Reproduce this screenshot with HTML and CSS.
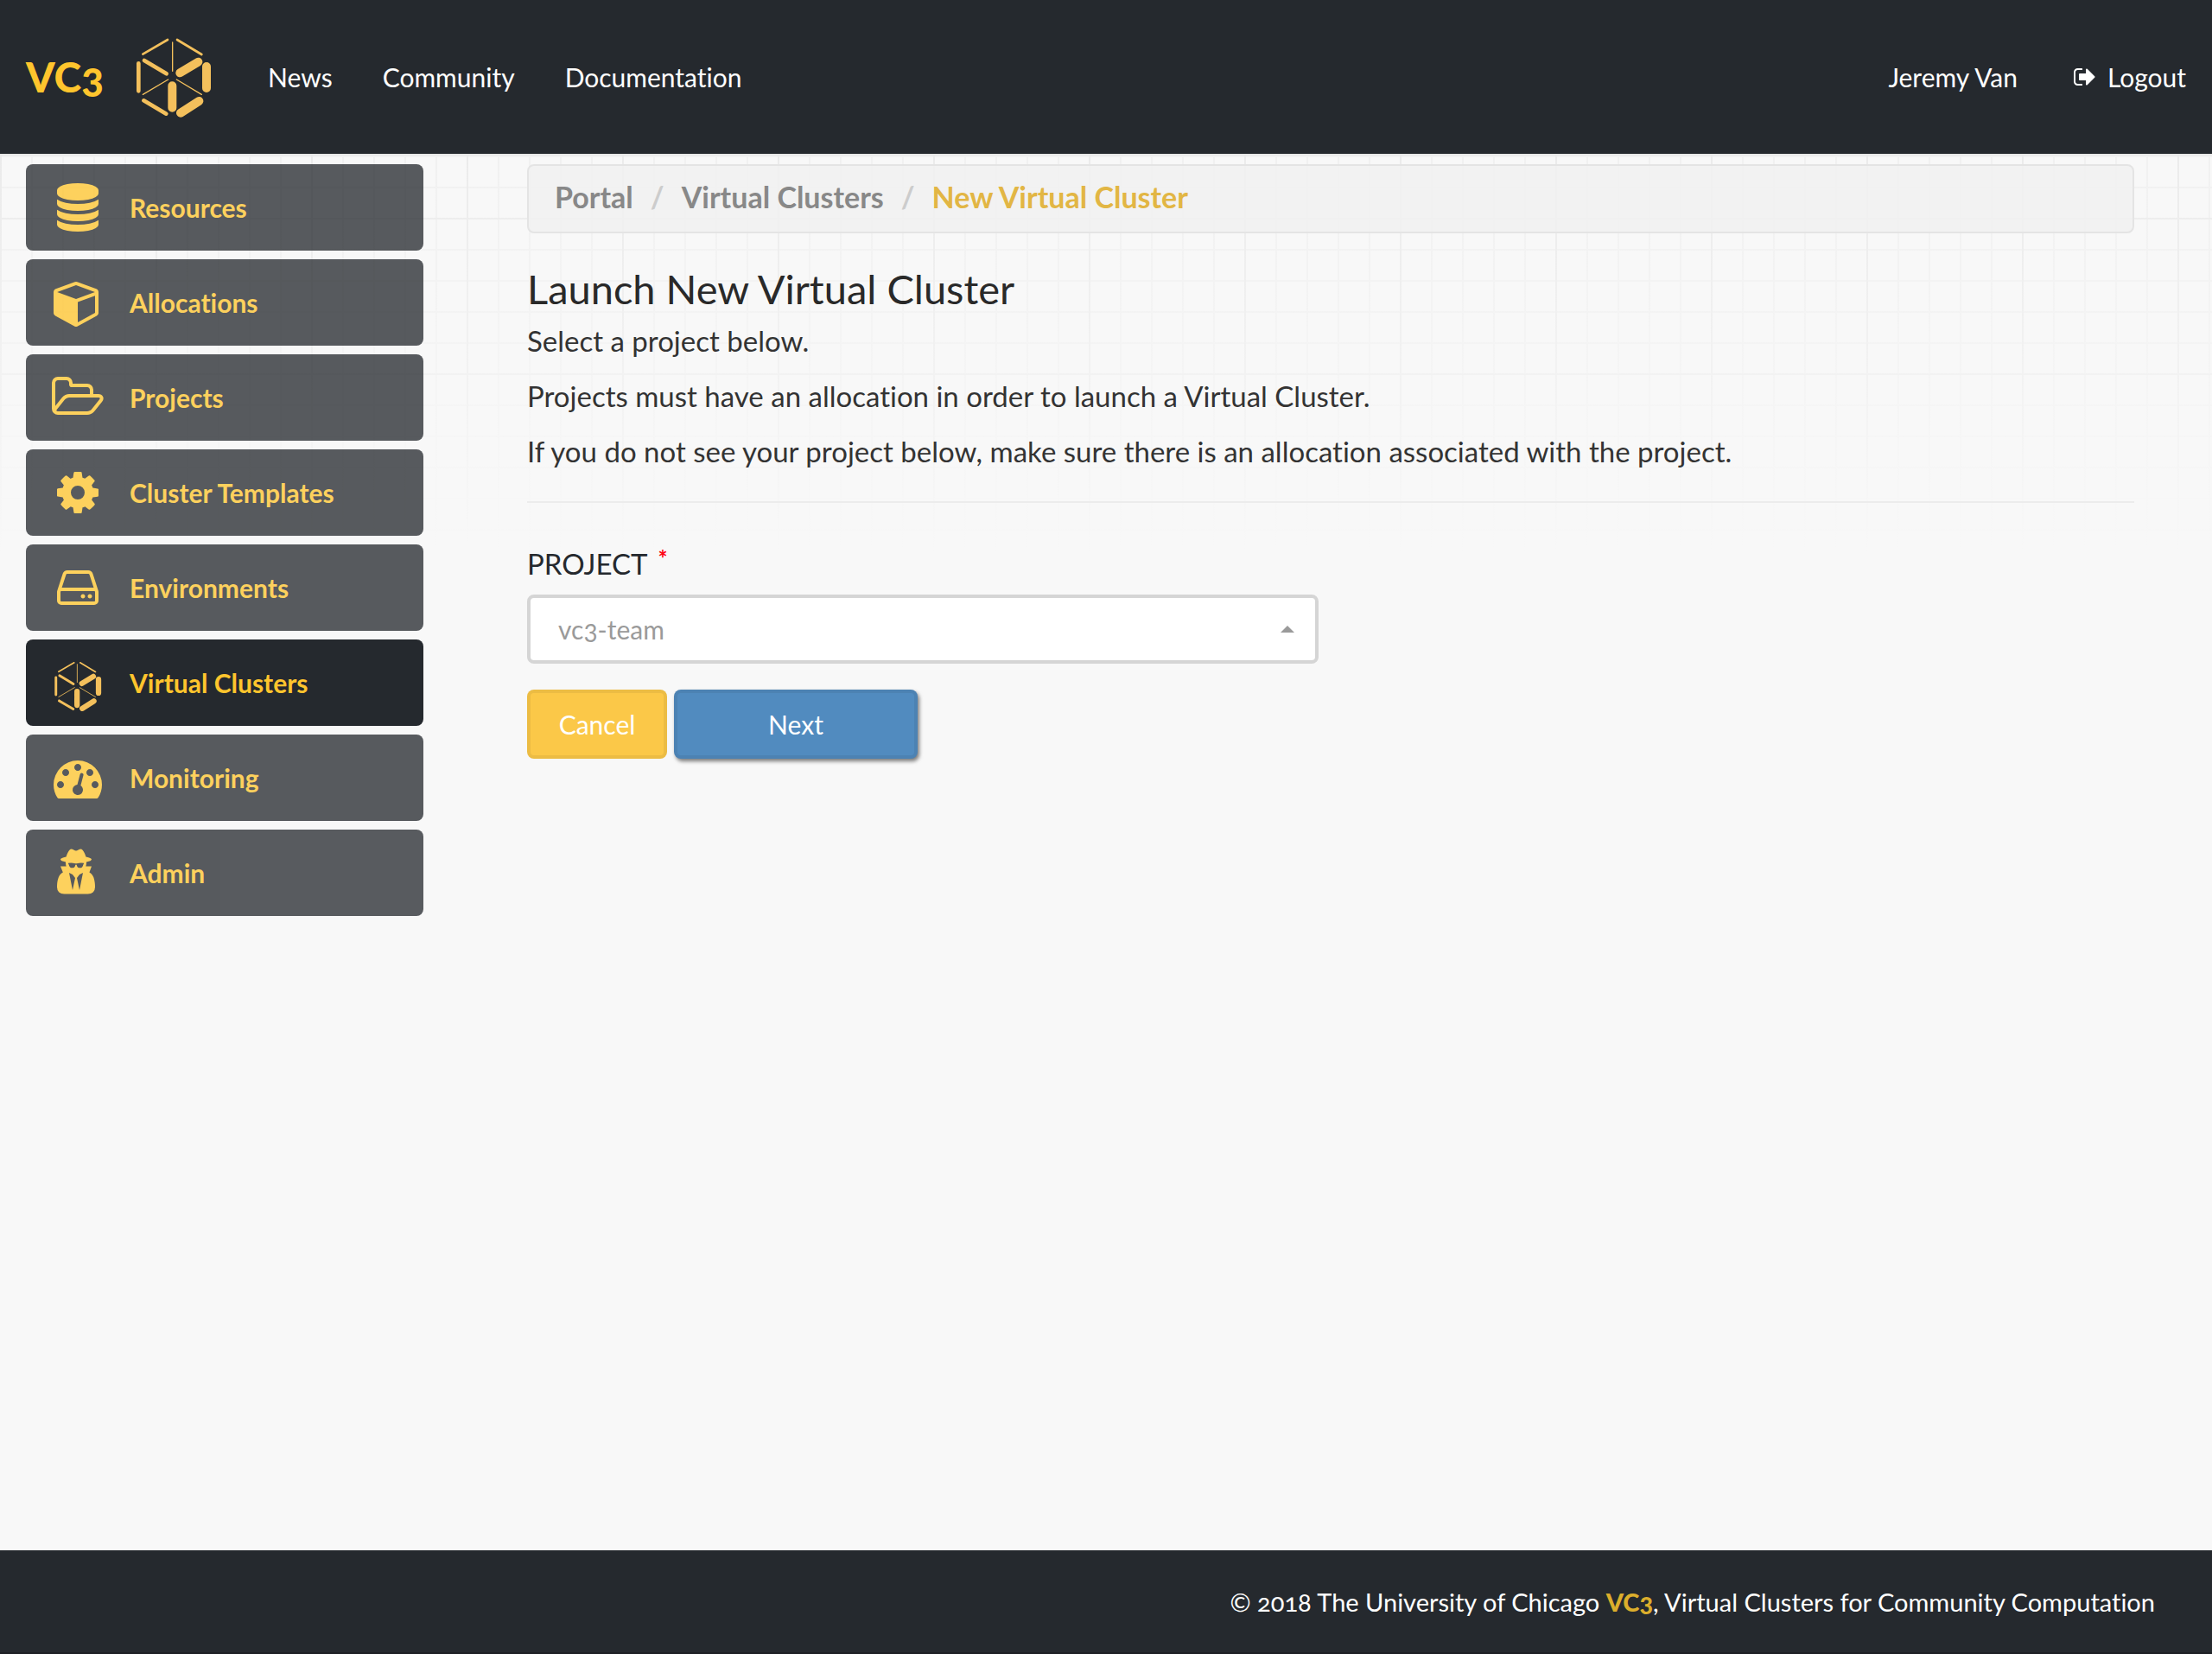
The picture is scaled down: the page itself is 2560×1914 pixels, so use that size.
FILE: index.html
```html
<!DOCTYPE html>
<html lang="en">
<head>
<meta charset="utf-8">
<meta name="viewport" content="width=device-width, initial-scale=1">
<title>VC3 - New Virtual Cluster</title>
<link rel="stylesheet" href="styles.css">
</head>
<body>
<svg class="sprite" aria-hidden="true">
  <symbol id="vc3-mark" viewBox="75 66 270 282">
    <g fill="none" stroke="currentColor" stroke-linecap="round">
      <path stroke-width="8" d="M103 128L189 78M222 78L307 129"/>
      <path stroke-width="4" d="M206 87V187M191 216L103 268M220 216L307 268"/>
      <path stroke-width="14" d="M108 150L185 196M106 289L184 335M88 160V256"/>
      <path stroke-width="30" d="M232 193L295 155M324 171V246M205 238V314M234 332L298 291"/>
    </g>
  </symbol>
</svg>

<header class="topbar">
  <a class="brand" href="#">VC3 <svg class="brand-mark" aria-hidden="true"><use href="#vc3-mark"/></svg></a>
  <nav class="topnav" aria-label="Main">
    <a href="#">News</a>
    <a href="#">Community</a>
    <a href="#">Documentation</a>
  </nav>
  <nav class="account" aria-label="Account">
    <a href="#">Jeremy Van</a>
    <a class="logout" href="#"><svg class="logout-icon" viewBox="0 0 1792 1792" aria-hidden="true"><path d="M704 1440q0 4 1 20t.5 26.5-3 23.5-10 19.5-20.5 6.5h-320q-119 0-203.5-84.5t-84.5-203.5v-704q0-119 84.5-203.5t203.5-84.5h320q13 0 22.500 9.500t9.500 22.500q0 4 1 20t.5 26.500-3 23.500-10 19.500-20.500 6.500h-320q-66 0-113 47t-47 113v704q0 66 47 113t113 47h312l11.500 1 11.500 3 8 5.500 7 9 2 13.500zm928-544q0 26-19 45l-544 544q-19 19-45 19t-45-19-19-45v-288h-448q-26 0-45-19t-19-45v-384q0-26 19-45t45-19h448v-288q0-26 19-45t45-19 45 19l544 544q19 19 19 45z"/></svg>Logout</a>
  </nav>
</header>

<div class="layout">
  <nav class="sidebar" aria-label="Portal">
    <a class="side-link" href="#"><span class="side-icon"><svg width="56" height="56" viewBox="0 0 1792 1792" aria-hidden="true"><path d="M896 768q237 0 443-43t325-127v170q0 69-103 128t-280 93.5-385 34.5-385-34.5-280-93.5-103-128v-170q119 84 325 127t443 43zm0 768q237 0 443-43t325-127v170q0 69-103 128t-280 93.5-385 34.5-385-34.5-280-93.5-103-128v-170q119 84 325 127t443 43zm0-384q237 0 443-43t325-127v170q0 69-103 128t-280 93.5-385 34.5-385-34.5-280-93.5-103-128v-170q119 84 325 127t443 43zm0-1152q208 0 385 34.5t280 93.5 103 128v128q0 69-103 128t-280 93.5-385 34.5-385-34.5-280-93.5-103-128v-128q0-69 103-128t280-93.5 385-34.5z"/></svg></span>Resources</a>
    <a class="side-link" href="#"><span class="side-icon"><svg width="56" height="56" viewBox="0 0 1792 1792" aria-hidden="true"><path d="M896 1629l640-349v-636l-640 233v752zm-64-865l698-254-698-254-698 254zm832-252v768q0 35-18 65t-49 47l-704 384q-28 16-61 16t-61-16l-704-384q-31-17-49-47t-18-65v-768q0-40 23-73t61-47l704-256q22-8 44-8t44 8l704 256q38 14 61 47t23 73z"/></svg></span>Allocations</a>
    <a class="side-link" href="#"><span class="side-icon"><svg width="64" height="56" viewBox="0 0 2048 1792" aria-hidden="true"><path d="M1845 931q0-35-53-35h-1088q-40 0-85.5 21.5t-71.5 52.5l-294 363q-18 24-18 40 0 35 53 35h1088q40 0 86-22t71-53l294-363q18-22 18-39zm-1141-163h768v-160q0-40-28-68t-68-28h-576q-40 0-68-28t-28-68v-64q0-40-28-68t-68-28h-320q-40 0-68 28t-28 68v853l256-315q44-53 116-87.5t140-34.5zm1269 163q0 62-46 120l-295 363q-43 53-116 87.5t-140 34.5h-1088q-92 0-158-66t-66-158v-960q0-92 66-158t158-66h320q92 0 158 66t66 158v32h544q92 0 158 66t66 158v160h192q54 0 99 24.5t67 70.5q15 32 15 68z"/></svg></span>Projects</a>
    <a class="side-link" href="#"><span class="side-icon"><svg width="56" height="56" viewBox="0 0 1792 1792" aria-hidden="true"><path d="M1152 896q0-106-75-181t-181-75-181 75-75 181 75 181 181 75 181-75 75-181zm512-109v222q0 12-8 23t-20 13l-185 28q-19 54-39 91 35 50 107 138 10 12 10 25t-9 23q-27 37-99 108t-94 71q-12 0-26-9l-138-108q-44 23-91 38-16 136-29 186-7 28-36 28h-222q-14 0-24.5-8.5t-11.5-21.500l-28-184q-49-16-90-37l-141 107q-10 9-25 9-14 0-25-11-126-114-165-168-7-10-7-23 0-12 8-23 15-21 51-66.5t54-70.5q-27-50-41-99l-183-27q-13-2-21-12.5t-8-23.5v-222q0-12 8-23t19-13l186-28q14-46 39-92-40-57-107-138-10-12-10-24 0-10 9-23 26-36 98.5-107.5t94.5-71.5q13 0 26 10l138 107q44-23 91-38 16-136 29-186 7-28 36-28h222q14 0 24.5 8.5t11.5 21.5l28 184q49 16 90 37l142-107q9-9 24-9 13 0 25 10 129 119 165 170 7 8 7 22 0 12-8 23-15 21-51 66.5t-54 70.5q26 50 41 98l183 28q13 2 21 12.5t8 23.5z"/></svg></span>Cluster Templates</a>
    <a class="side-link" href="#"><span class="side-icon"><svg width="56" height="56" viewBox="0 0 1792 1792" aria-hidden="true"><path d="M1168 1216q0 33-23.5 56.5t-56.5 23.5-56.5-23.5-23.5-56.5 23.5-56.5 56.5-23.5 56.5 23.5 23.5 56.5zm256 0q0 33-23.5 56.5t-56.5 23.5-56.5-23.5-23.5-56.5 23.5-56.5 56.5-23.5 56.5 23.5 23.5 56.5zm112 160v-320q0-13-9.5-22.5t-22.5-9.5h-1216q-13 0-22.5 9.5t-9.500 22.500v320q0 13 9.500 22.500t22.500 9.500h1216q13 0 22.500-9.500t9.500-22.500zm-1230-480h1180l-157-482q-4-13-16-21.500t-26-8.500h-782q-14 0-26 8.500t-16 21.500zm1358 160v320q0 66-47 113t-113 47h-1216q-66 0-113-47t-47-113v-320q0-25 16-75l197-606q17-53 63-86t101-33h782q55 0 101 33t63 86l197 606q16 50 16 75z"/></svg></span>Environments</a>
    <a class="side-link side-link-active" href="#" aria-current="page"><span class="side-icon side-icon-mark"><svg width="58" height="66" viewBox="0 0 276 316" aria-hidden="true"><use href="#vc3-mark" x="4" y="35" width="270" height="282"/></svg></span>Virtual Clusters</a>
    <a class="side-link" href="#"><span class="side-icon"><svg width="56" height="56" viewBox="0 0 1792 1792" aria-hidden="true"><path d="M384 1152q0-53-37.5-90.5t-90.5-37.5-90.5 37.5-37.5 90.5 37.5 90.5 90.5 37.5 90.5-37.5 37.5-90.5zm192-448q0-53-37.5-90.5t-90.5-37.5-90.5 37.5-37.5 90.5 37.5 90.5 90.5 37.5 90.5-37.5 37.5-90.5zm428 481l101-382q6-26-7.5-48.5t-38.5-29.5-48 6.5-30 39.5l-101 382q-60 5-107 43.5t-63 98.5q-20 77 20 146t117 89 146-20 89-117q16-60-6-117t-72-91zm660-33q0-53-37.5-90.5t-90.5-37.5-90.5 37.5-37.5 90.5 37.5 90.5 90.5 37.5 90.5-37.5 37.5-90.5zm-640-640q0-53-37.5-90.5t-90.5-37.5-90.5 37.5-37.5 90.5 37.5 90.5 90.5 37.5 90.5-37.5 37.5-90.5zm448 192q0-53-37.5-90.5t-90.5-37.5-90.5 37.5-37.5 90.5 37.5 90.5 90.5 37.5 90.5-37.5 37.5-90.5zm320 448q0 261-141 483-19 29-54 29h-1402q-35 0-54-29-141-221-141-483 0-182 71-348t191-286 286-191 348-71 348 71 286 191 191 286 71 348z"/></svg></span>Monitoring</a>
    <a class="side-link" href="#"><span class="side-icon"><svg width="56" height="56" viewBox="0 0 1792 1792" aria-hidden="true"><path d="M704 1536l96-448-96-128-128-64zm256 0l128-640-128 64-96 128zm160-992q-2-4-4-6-10-8-96-8-70 0-167 19-7 2-21 2t-21-2q-97-19-167-19-86 0-96 8-2 2-4 6 2 18 4 27 2 3 7.5 6.5t7.5 10.5q2 4 7.5 20.5t7 20.5 7.5 17 8.5 17 9 14 12 13.5 14 9.5 17.5 8 20.5 4 24.5 2q36 0 59-12.5t32.5-30 14.5-34.5 11.5-29.5 17.5-12.5h12q11 0 17.5 12.5t11.5 29.5 14.5 34.5 32.5 30 59 12.5q13 0 24.5-2t20.5-4 17.5-8 14-9.5 12-13.5 9-14 8.5-17 7.5-17 7-20.5 7.5-20.5q2-7 7.5-10.5t7.5-6.5q2-9 4-27zm416 879q0 121-73 190t-194 69h-874q-121 0-194-69t-73-190q0-61 4.5-118t19-125.5 37.5-123.5 63.5-103.5 93.5-74.5l-90-220h214q-22-64-22-128 0-12 2-32-194-40-194-96 0-57 210-99 17-62 51.5-134t70.5-114q32-37 76-37 30 0 84 31t84 31 84-31 84-31q44 0 76 37 36 42 70.5 114t51.5 134q210 42 210 99 0 56-194 96 7 81-20 160h214l-82 225q63 33 107.5 96.5t65.5 143.5 29 151.5 8 148.5z"/></svg></span>Admin</a>
  </nav>

  <main class="content">
    <nav aria-label="Breadcrumb">
      <ol class="breadcrumb">
        <li><a href="#">Portal</a></li>
        <li><a href="#">Virtual Clusters</a></li>
        <li class="crumb-active" aria-current="page">New Virtual Cluster</li>
      </ol>
    </nav>

    <section class="intro">
      <h1>Launch New Virtual Cluster</h1>
      <p>Select a project below.</p>
      <p>Projects must have an allocation in order to launch a Virtual Cluster.</p>
      <p>If you do not see your project below, make sure there is an allocation associated with the project.</p>
    </section>

    <form class="launch-form">
      <label for="project">PROJECT <span class="required">*</span></label>
      <div class="select-box">
        <select id="project" name="project" required>
          <option>vc3-team</option>
        </select>
        <svg class="caret" viewBox="0 0 16 8" aria-hidden="true"><path d="M0 8L8 0L16 8z"/></svg>
      </div>
      <div class="actions">
        <button class="btn btn-cancel" type="button">Cancel</button>
        <button class="btn btn-next" type="submit">Next</button>
      </div>
    </form>
  </main>
</div>

<footer class="footer">
  <p>© 2018 The University of Chicago <a href="#">VC3</a>, Virtual Clusters for Community Computation</p>
</footer>
</body>
</html>
```
FILE: styles.css
```css
* {
  box-sizing: border-box;
}

body {
  display: flex;
  flex-direction: column;
  min-height: 100vh;
  margin: 0;
  color: #333;
  font: 33px/48px Lato, sans-serif;
  font-variant-ligatures: none;
  font-variant-numeric: oldstyle-nums;
  /* graph paper: 36px cells, a stronger line every fifth, faded out downwards */
  background-color: #f8f8f8;
  background-image:
    linear-gradient(rgba(248, 248, 248, 0) 0, #f8f8f8 640px),
    linear-gradient(90deg, #e6e6e6 2px, transparent 2px),
    linear-gradient(#e6e6e6 2px, transparent 2px),
    linear-gradient(90deg, #eee 2px, transparent 2px),
    linear-gradient(#eee 2px, transparent 2px);
  background-size: 100% 100%, 180px 180px, 180px 180px, 36px 36px, 36px 36px;
  background-position: 0 0, 0 72px, 0 72px, 0 0, 0 0;
}

a {
  color: inherit;
  text-decoration: none;
}

svg {
  display: block;
  flex-shrink: 0;
  fill: currentColor;
}

.sprite {
  position: absolute;
  width: 0;
  height: 0;
}

.topbar {
  display: flex;
  align-items: center;
  padding: 42px 30px;
  color: #fff;
  background: #25292e;
  border-bottom: 2px solid #e7e7e7;
  font-size: 30px;
}

.brand {
  display: flex;
  align-items: center;
  gap: 36px;
  color: #ffc52d;
  font-size: 48px;
  font-weight: 900;
}

.brand-mark {
  width: 90px;
  height: 94px;
  color: #f4c05c;
}

.topnav,
.account {
  display: flex;
  gap: 58px;
}

.topnav {
  margin-left: 64px;
}

.account {
  gap: 64px;
  margin-left: auto;
}

.logout {
  display: flex;
  align-items: center;
  gap: 12px;
}

.logout-icon {
  width: 28px;
  height: 28px;
}

.layout {
  display: flex;
  flex: 1;
  align-items: flex-start;
  gap: 120px;
  padding: 10px 90px 60px 30px;
}

.sidebar {
  display: flex;
  flex: 0 0 460px;
  flex-direction: column;
  gap: 10px;
}

.side-link {
  display: flex;
  align-items: center;
  gap: 30px;
  height: 100px;
  padding-left: 30px;
  color: #ffc52d;
  background: #25292e;
  border-radius: 8px;
  font-size: 30px;
  font-weight: 700;
  opacity: 0.76;
}

.side-link-active {
  opacity: 1;
}

.side-icon {
  display: flex;
  flex-shrink: 0;
  justify-content: center;
  width: 60px;
}

.side-icon-mark {
  color: #f4c05c;
}

.content {
  flex: 1;
  min-width: 0;
}

.breadcrumb {
  display: flex;
  margin: 0;
  padding: 12px 30px 16px;
  color: #888;
  background: rgba(240, 240, 240, 0.88);
  border: 2px solid #e4e4e4;
  border-radius: 8px;
  font-size: 34px;
  font-weight: 700;
  list-style: none;
}

.breadcrumb li + li::before {
  content: "/";
  padding: 0 20px;
  color: #ccc;
}

.breadcrumb .crumb-active {
  color: #e2b644;
}

.intro {
  padding: 40px 0 18px;
  border-bottom: 2px solid #ececec;
}

.intro h1 {
  margin: 0 0 12px;
  color: #292929;
  font-size: 47px;
  font-weight: 400;
  line-height: 48px;
}

.intro p {
  margin: 0 0 16px;
}

.launch-form {
  padding-top: 46px;
}

.launch-form label {
  display: flex;
  gap: 12px;
  margin-bottom: 12px;
  color: #25292e;
}

.required {
  color: #f01;
  font-size: 26px;
  font-weight: 700;
  line-height: 36px;
}

.select-box {
  display: grid;
  align-items: center;
  width: 916px;
  max-width: 100%;
}

.select-box select,
.caret {
  grid-area: 1 / 1;
}

.select-box select {
  height: 80px;
  padding: 0 32px;
  color: #9a9a9a;
  background: #fff;
  border: 4px solid #d5d5d5;
  border-radius: 8px;
  appearance: none;
  font: inherit;
  font-size: 30px;
}

.caret {
  justify-self: end;
  width: 16px;
  height: 8px;
  margin-right: 28px;
  color: #9a9a9a;
  pointer-events: none;
}

.actions {
  display: flex;
  gap: 8px;
  margin-top: 30px;
}

.btn {
  height: 80px;
  padding: 0 32px;
  color: #fff;
  border: 4px solid rgba(0, 0, 0, 0.06);
  border-radius: 8px;
  font: inherit;
  font-size: 30px;
}

.btn-cancel {
  min-width: 162px;
  background: #fbc848;
}

.btn-next {
  min-width: 282px;
  background: #518bbf;
  box-shadow: 2px 3px 4px rgba(0, 0, 0, 0.5);
}

.footer {
  padding: 36px 66px 34px;
  color: #fff;
  background: #25292e;
  border-bottom: 2px solid #1d2024;
  font-size: 29px;
  text-align: right;
}

.footer p {
  margin: 0;
}

.footer a {
  color: #dcae2c;
  font-weight: 900;
}
```
